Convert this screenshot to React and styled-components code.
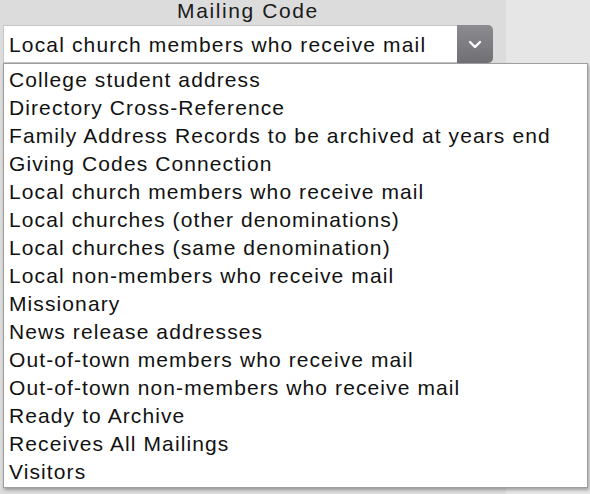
import React from "react";
import styled, { createGlobalStyle } from "styled-components";

const GlobalStyle = createGlobalStyle`
  html, body {
    margin: 0;
    padding: 0;
    background: #dddddd;
  }
  body {
    font-family: "Liberation Sans", Arial, Helvetica, sans-serif;
    color: #111;
  }
`;

const options = [
  "College student address",
  "Directory Cross-Reference",
  "Family Address Records to be archived at years end",
  "Giving Codes Connection",
  "Local church members who receive mail",
  "Local churches (other denominations)",
  "Local churches (same denomination)",
  "Local non-members who receive mail",
  "Missionary",
  "News release addresses",
  "Out-of-town members who receive mail",
  "Out-of-town non-members who receive mail",
  "Ready to Archive",
  "Receives All Mailings",
  "Visitors",
];

const Page = styled.div`
  position: relative;
  display: flex;
  width: 590px;
  height: 494px;
  overflow: hidden;
`;

const LeftPanel = styled.div`
  width: 506px;
  background: #dcdcdc;
  padding: 0 0 0 3px;
  box-sizing: border-box;
`;

const RightPanel = styled.div`
  flex: 1;
  background: #e6e6e6;
`;

const Field = styled.div`
  width: 490px;
  display: flex;
  flex-direction: column;
`;

const Label = styled.div`
  height: 25px;
  line-height: 22px;
  text-align: center;
  font-size: 21px;
  letter-spacing: 1.6px;
  color: #1a1a1a;
`;

const SelectBox = styled.div`
  display: flex;
  height: 38px;
  box-sizing: border-box;
`;

const Value = styled.div`
  flex: 1;
  background: #fff;
  border: 1px solid #c6c6c6;
  border-right: none;
  padding-left: 5px;
  font-size: 21px;
  letter-spacing: 1.15px;
  line-height: 38px;
  box-sizing: border-box;
  white-space: nowrap;
`;

const Arrow = styled.div`
  width: 36px;
  display: flex;
  align-items: center;
  justify-content: center;
  border-radius: 0 5px 5px 0;
  background: linear-gradient(#8c8b90, #706f74);
`;

const Popup = styled.ul`
  position: absolute;
  left: 3px;
  top: 63px;
  width: 585px;
  height: 425px;
  margin: 0;
  padding: 2px 0 1px;
  list-style: none;
  background: #fff;
  border: 1px solid #9e9e9e;
  box-shadow: 1px 2px 3px rgba(0, 0, 0, 0.3);
  box-sizing: border-box;
`;

const Item = styled.li`
  height: 28px;
  line-height: 28px;
  padding-left: 5px;
  font-size: 21px;
  letter-spacing: 1.1px;
  white-space: nowrap;
  color: #111;
`;

function Chevron() {
  return (
    <svg width="14" height="9" viewBox="0 0 14 9">
      <path
        d="M2 2 L7 7 L12 2"
        fill="none"
        stroke="#fff"
        strokeWidth="2.4"
        strokeLinecap="round"
        strokeLinejoin="round"
      />
    </svg>
  );
}

export default function App() {
  return (
    <>
      <GlobalStyle />
      <Page>
        <LeftPanel>
          <Field>
            <Label>Mailing Code</Label>
            <SelectBox>
              <Value>Local church members who receive mail</Value>
              <Arrow>
                <Chevron />
              </Arrow>
            </SelectBox>
          </Field>
        </LeftPanel>
        <RightPanel />
        <Popup>
          {options.map((o) => (
            <Item key={o}>{o}</Item>
          ))}
        </Popup>
      </Page>
    </>
  );
}
